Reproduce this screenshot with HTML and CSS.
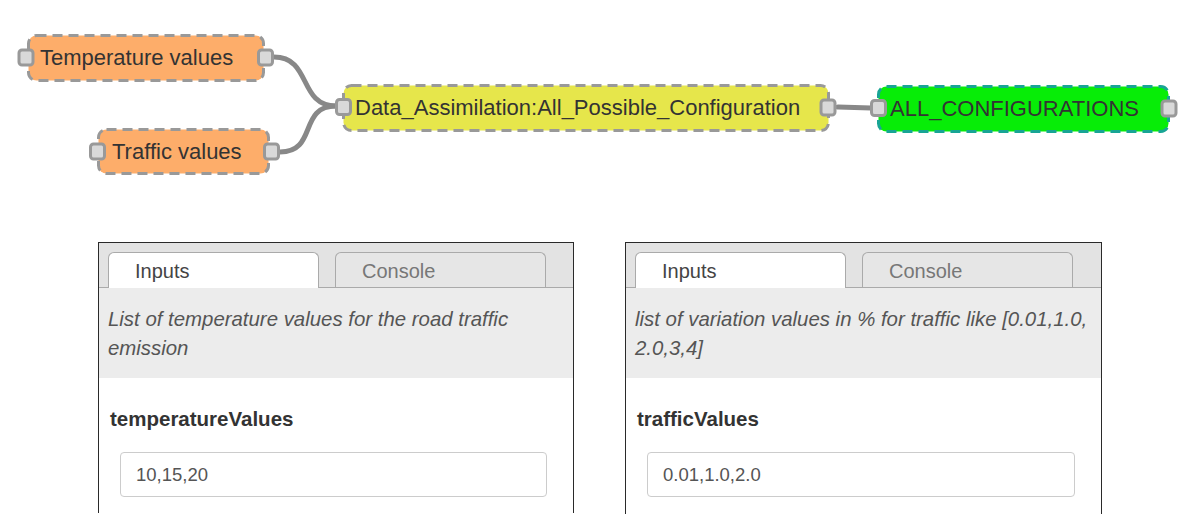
FILE: index.html
```html
<!DOCTYPE html>
<html>
<head>
<meta charset="utf-8">
<link rel="stylesheet" href="styles.css">
</head>
<body>
<div class="canvas">
  <svg class="flow" width="1200" height="242" viewBox="0 0 1200 242">
    <g class="wires">
      <path d="M274 57 C312 57 298 106 336 106"/>
      <path d="M280 152 C318 152 298 106 336 106"/>
      <path d="M838 107 L871 108"/>
    </g>
    <g class="node orange">
      <rect x="28.5" y="35.5" width="235" height="45" rx="8"/>
      <text x="40" y="65">Temperature values</text>
      <rect class="port" x="19" y="50" width="14" height="15" rx="3"/>
      <rect class="port" x="258.5" y="50" width="14" height="15" rx="3"/>
    </g>
    <g class="node orange">
      <rect x="98.5" y="129.5" width="170" height="44" rx="8"/>
      <text x="112" y="159">Traffic values</text>
      <rect class="port" x="90.5" y="144" width="14" height="15" rx="3"/>
      <rect class="port" x="264.5" y="144" width="14" height="15" rx="3"/>
    </g>
    <g class="node yellow">
      <rect x="343.5" y="85.5" width="485" height="45" rx="8"/>
      <text x="355" y="115">Data_Assimilation:All_Possible_Configuration</text>
      <rect class="port" x="336.5" y="99.5" width="14" height="15" rx="3"/>
      <rect class="port" x="821" y="100" width="14" height="15" rx="3"/>
    </g>
    <g class="node green">
      <rect x="878.5" y="86.5" width="290" height="45" rx="8"/>
      <text x="890" y="116">ALL_CONFIGURATIONS</text>
      <rect class="port" x="871.5" y="100.5" width="14" height="15" rx="3"/>
      <rect class="port" x="1162" y="101" width="14" height="15" rx="3"/>
    </g>
  </svg>
</div>
<div class="panels">
  <div class="panel panel-left">
    <div class="tabbar">
      <div class="tab active">Inputs</div>
      <div class="tab">Console</div>
    </div>
    <div class="desc">List of temperature values for the road traffic emission</div>
    <div class="field">
      <div class="label">temperatureValues</div>
      <div class="input">10,15,20</div>
    </div>
  </div>
  <div class="panel panel-right">
    <div class="tabbar">
      <div class="tab active">Inputs</div>
      <div class="tab">Console</div>
    </div>
    <div class="desc">list of variation values in % for traffic like [0.01,1.0, 2.0,3,4]</div>
    <div class="field">
      <div class="label">trafficValues</div>
      <div class="input">0.01,1.0,2.0</div>
    </div>
  </div>
</div>
</body>
</html>
```

FILE: styles.css
```css
html, body {
  margin: 0;
  padding: 0;
  background: #ffffff;
  font-family: "Liberation Sans", Arial, sans-serif;
}

.canvas {
  position: relative;
  height: 242px;
}

.flow {
  display: block;
}

.wires path {
  fill: none;
  stroke: #888888;
  stroke-width: 5;
  stroke-linecap: round;
}

.node rect {
  stroke: #999999;
  stroke-width: 3;
  stroke-dasharray: 10 6;
}

.node text {
  font-family: "Liberation Sans", Arial, sans-serif;
  font-size: 22px;
  fill: #333333;
}

.node .port {
  fill: #d9d9d9;
  stroke: #999999;
  stroke-width: 3;
  stroke-dasharray: none;
}

.orange > rect:first-child { fill: #fdad6a; }
.yellow > rect:first-child { fill: #e6e64b; }
.green > rect:first-child { fill: #07ed07; stroke: #18a594; }

.panels {
  display: flex;
  gap: 51px;
  padding-left: 98px;
  height: 272px;
}

.panel {
  box-sizing: border-box;
  border: 1px solid #2a2a2a;
  border-bottom: none;
  overflow: hidden;
  background: #ffffff;
}

.panel-left { width: 476px; height: 271px; }
.panel-right { width: 477px; height: 275px; }

.tabbar {
  box-sizing: border-box;
  height: 45px;
  background: #e3e3e3;
  border-bottom: 1px solid #aaaaaa;
  display: flex;
  align-items: flex-end;
  gap: 16px;
  padding-left: 9px;
}

.tab {
  box-sizing: border-box;
  width: 211px;
  height: 35px;
  border: 1px solid #aaaaaa;
  border-bottom: none;
  border-radius: 6px 6px 0 0;
  background: #e6e6e6;
  color: #777777;
  font-size: 20px;
  line-height: 36px;
  padding-left: 26px;
}

.tab.active {
  background: #ffffff;
  color: #444444;
  height: 36px;
  margin-bottom: -1px;
}

.desc {
  background: #ececec;
  height: 90px;
  box-sizing: border-box;
  padding: 17px 9px 15px 9px;
  font-style: italic;
  font-size: 20.4px;
  line-height: 29px;
  color: #555555;
}

.field {
  padding: 29px 26px 0 11px;
}

.label {
  font-weight: bold;
  font-size: 20.5px;
  line-height: 24px;
  color: #333333;
}

.input {
  box-sizing: border-box;
  margin-top: 21px;
  margin-left: 10px;
  height: 45px;
  border: 1px solid #cccccc;
  border-radius: 4px;
  padding-left: 15px;
  font-size: 18.5px;
  line-height: 43px;
  color: #555555;
}
```
